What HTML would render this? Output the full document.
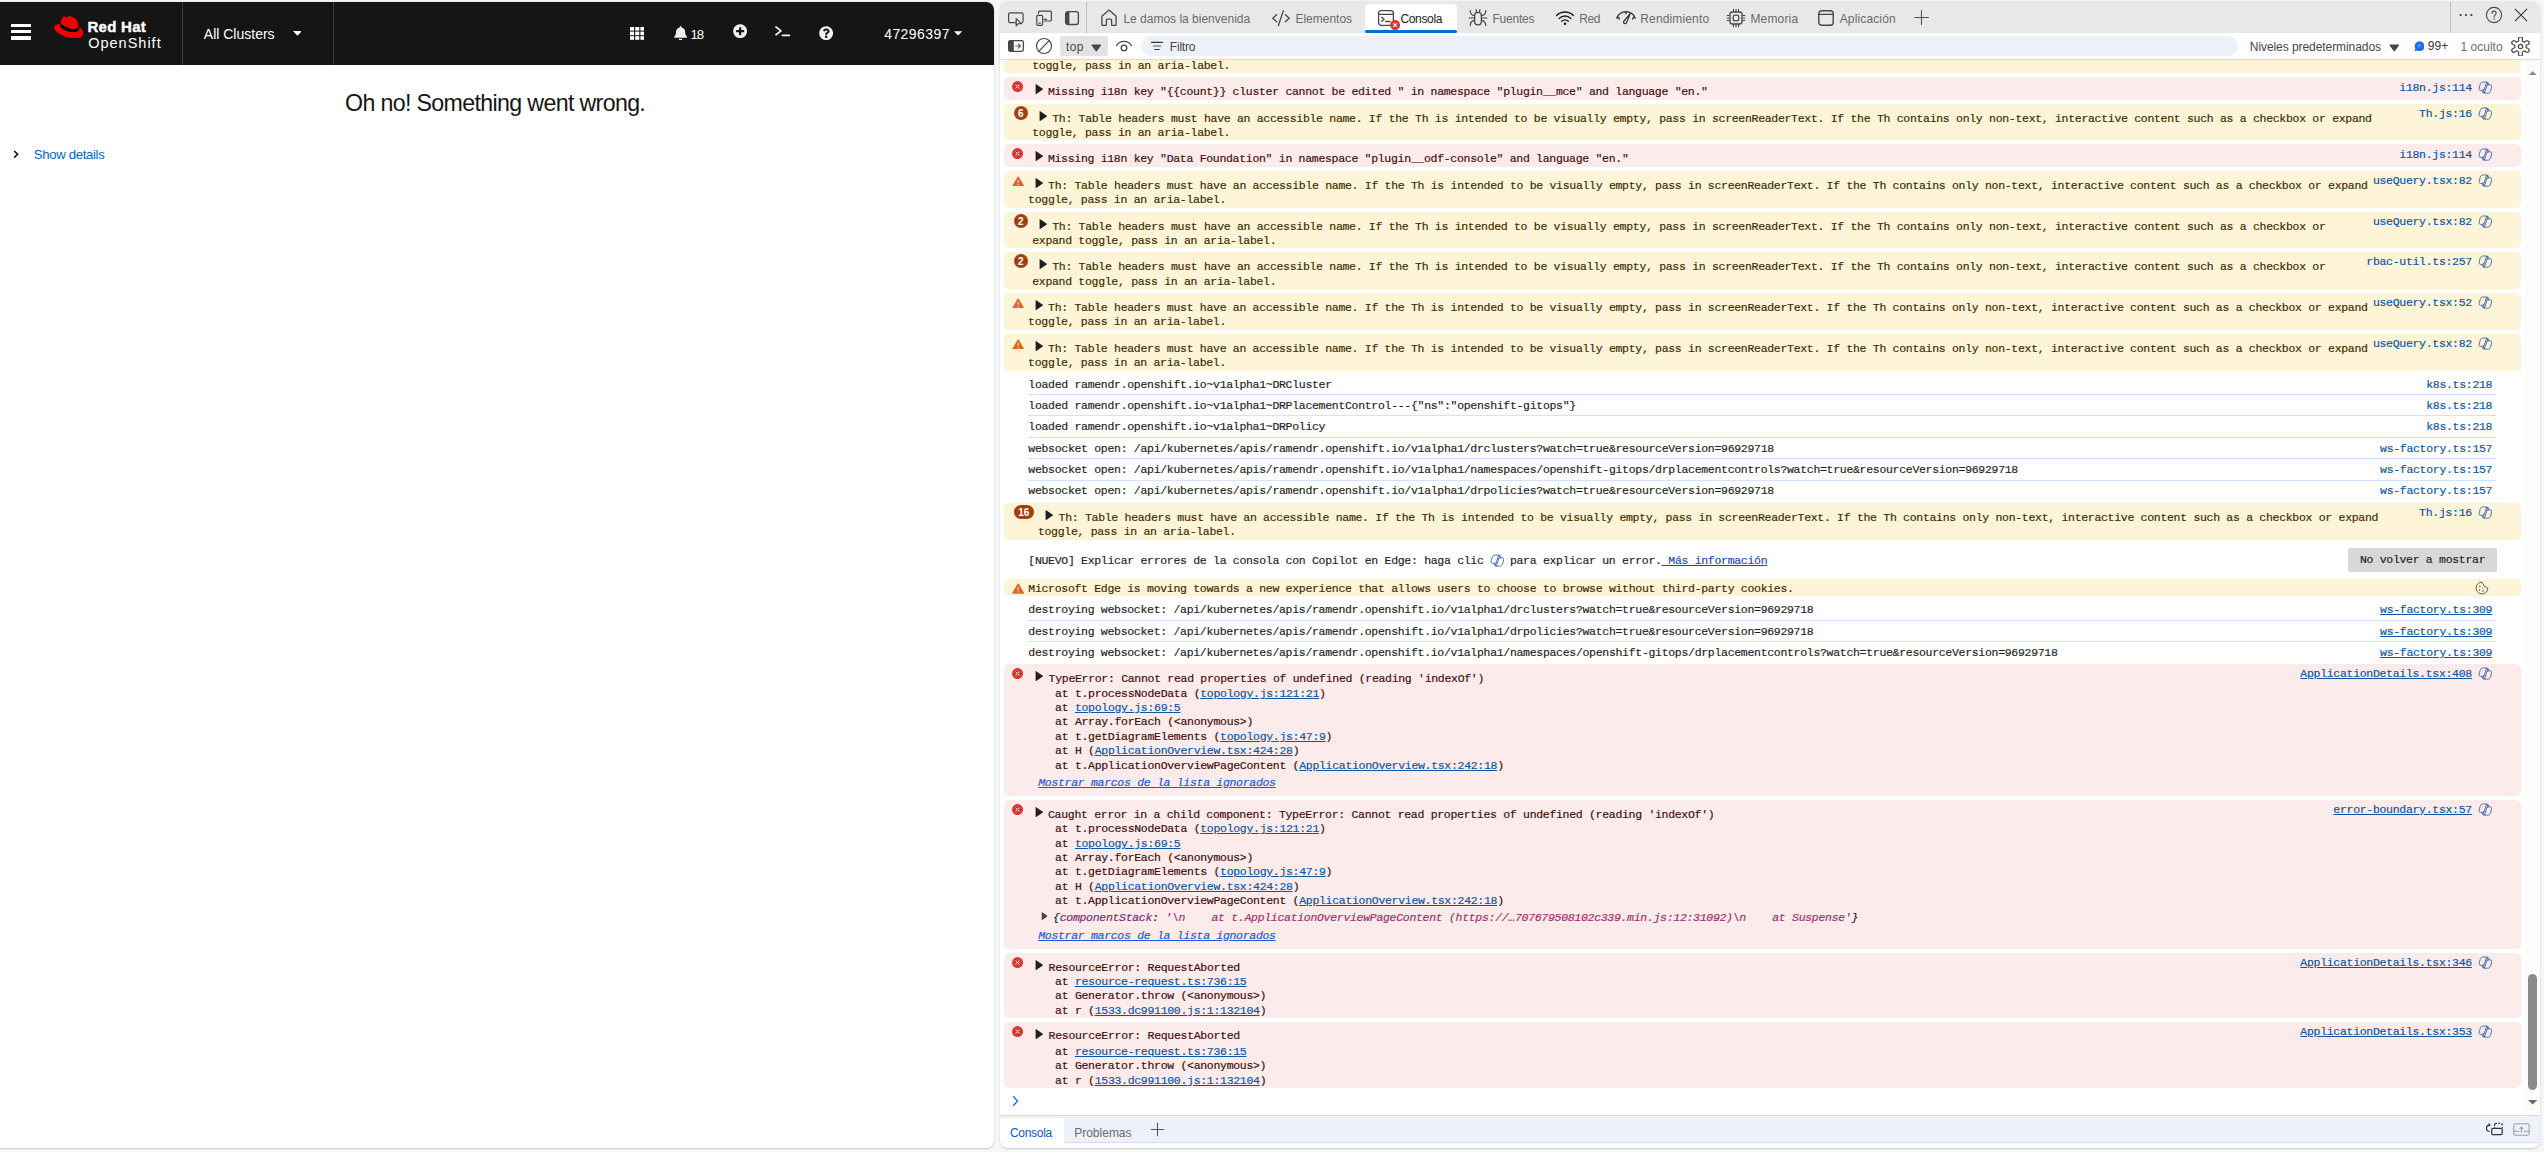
<!DOCTYPE html>
<html lang="es"><head><meta charset="utf-8"><title>OpenShift - DevTools</title>
<style>
html,body{margin:0;padding:0}
body{width:2544px;height:1152px;position:relative;overflow:hidden;background:#f6f6f6;font-family:"Liberation Sans",sans-serif}
.abs,.m,.s,.row,.sep,.ic{position:absolute}
#left{position:absolute;left:0;top:2px;width:994px;height:1146px;background:#fff;border-radius:0 8px 8px 0;overflow:hidden;box-shadow:0 .5px 2px rgba(0,0,0,.18)}
#dt{position:absolute;left:1000px;top:2px;width:1540px;height:1146px;background:#fff;border-radius:8px;overflow:hidden;box-shadow:0 .5px 2px rgba(0,0,0,.18)}
.m{font:11.5px/14px "Liberation Mono",monospace;letter-spacing:-0.3035px;white-space:pre;color:#1f1f1f;-webkit-text-stroke:0.18px currentColor}
.s{font-family:"Liberation Sans",sans-serif;white-space:pre}
.row{left:4px;width:1517px;border-radius:5px}
.err{background:#fcebeb}
.wrn{background:#fef4d7}
.m.e{color:#410e0b}
.m.w{color:#3d2c00}
.m.a{color:#0b57a4}
.m.u, .m u{text-decoration:underline}
.m.i{font-style:italic}
.m u.a{color:#0b57a4}
.sep{height:1px;background:#d3e3fd}
</style></head><body>
<div id="left"><div class="abs" style="left:0px;top:0px;width:994px;height:62.5px;background:#151515"></div><div class="abs" style="left:11.2px;top:21.6px;width:19.4px;height:3.4px;background:#fff;border-radius:.5px"></div><div class="abs" style="left:11.2px;top:27.9px;width:19.4px;height:3.4px;background:#fff;border-radius:.5px"></div><div class="abs" style="left:11.2px;top:34.4px;width:19.4px;height:3.4px;background:#fff;border-radius:.5px"></div><svg class="ic" style="left:53.6px;top:13.6px;" width="29.6" height="22.5" viewBox="0 0 191.35 145"><path fill="#e00" d="M127.47,83.49c12.51,0,30.61-2.58,30.61-17.46a14,14,0,0,0-.31-3.42l-7.45-32.36c-1.72-7.12-3.23-10.35-15.73-16.6C124.89,8.69,103.76.5,97.51.5,91.69.5,90,8,83.06,8c-6.68,0-11.64-5.6-17.89-5.6-6,0-9.91,4.09-12.93,12.5,0,0-8.41,23.72-9.49,27.16A6.43,6.43,0,0,0,42.53,44c0,9.22,36.3,39.45,84.94,39.45M160,72.07c1.73,8.19,1.73,9.05,1.73,10.13,0,14-15.74,21.77-36.43,21.77C78.54,104,37.58,76.6,37.58,58.49a18.45,18.45,0,0,1,1.51-7.33C22.27,52,.5,55,.5,74.22c0,31.48,74.59,70.28,133.65,70.28,45.28,0,56.7-20.48,56.7-36.65,0-12.72-11-27.16-30.83-35.78"/><path fill="#000" d="M160,72.07c1.73,8.19,1.73,9.05,1.73,10.13,0,14-15.74,21.77-36.43,21.77C78.54,104,37.58,76.6,37.58,58.49a18.45,18.45,0,0,1,1.51-7.33l3.66-9.06A6.43,6.43,0,0,0,42.53,44c0,9.22,36.3,39.45,84.94,39.45,12.510,0,30.61-2.58,30.61-17.46a14,14,0,0,0-.31-3.42Z"/></svg><div class="s" style="left:87.4px;top:15.2px;font-size:15px;line-height:20px;color:#fff;font-weight:700;letter-spacing:0.3px;-webkit-text-stroke:.4px #fff;">Red Hat</div><div class="s" style="left:88.2px;top:32.38px;font-size:14.5px;line-height:19px;color:#fff;font-weight:400;letter-spacing:1px;">OpenShift</div><div class="abs" style="left:182px;top:0px;width:1px;height:62.5px;background:#3c3f42"></div><div class="s" style="left:203.8px;top:23.45px;font-size:14px;line-height:18px;color:#fff;font-weight:400;">All Clusters</div><svg class="ic" style="left:292.6px;top:29.4px;" width="8.8" height="4.8" viewBox="0 0 10 5.4"><path fill="#fff" d="M0 0h10L5 5.4z"/></svg><div class="abs" style="left:333px;top:0px;width:1px;height:62.5px;background:#3c3f42"></div><svg class="ic" style="left:629.8px;top:24.8px;" width="14.5" height="12.8" viewBox="0 0 14.5 12.8"><rect x="0.0" y="0.0" width="4.1" height="3.6" fill="#fff"/><rect x="5.2" y="0.0" width="4.1" height="3.6" fill="#fff"/><rect x="10.4" y="0.0" width="4.1" height="3.6" fill="#fff"/><rect x="0.0" y="4.6" width="4.1" height="3.6" fill="#fff"/><rect x="5.2" y="4.6" width="4.1" height="3.6" fill="#fff"/><rect x="10.4" y="4.6" width="4.1" height="3.6" fill="#fff"/><rect x="0.0" y="9.2" width="4.1" height="3.6" fill="#fff"/><rect x="5.2" y="9.2" width="4.1" height="3.6" fill="#fff"/><rect x="10.4" y="9.2" width="4.1" height="3.6" fill="#fff"/></svg><svg class="ic" style="left:673.6px;top:23.6px;" width="13.2" height="14.6" viewBox="0 0 448 512"><path fill="#f0f0f0" d="M224 512c35.32 0 63.97-28.65 63.97-64H160.03c0 35.35 28.65 64 63.97 64zm215.39-149.71c-19.32-20.76-55.47-51.99-55.47-154.29 0-77.7-54.48-139.9-127.94-155.16V32c0-17.67-14.32-32-31.98-32s-31.98 14.33-31.98 32v20.84C118.56 68.1 64.08 130.300 64.08 208c0 102.300-36.15 133.530-55.47 154.290-6 6.450-8.660 14.160-8.610 21.710.110 16.400 12.980 32 32.100 32h383.800c19.120 0 32-15.600 32.100-32 .050-7.550-2.610-15.270-8.610-21.710z"/></svg><div class="s" style="left:690.6px;top:23.83px;font-size:13.2px;line-height:17px;color:#fff;font-weight:400;letter-spacing:-1.2px;">18</div><svg class="ic" style="left:733px;top:22px;" width="14.3" height="14.3" viewBox="0 0 512 512"><path fill="#f0f0f0" d="M256 8C119 8 8 119 8 256s111 248 248 248 248-111 248-248S393 8 256 8zm144 276c0 6.600-5.400 12-12 12h-92v92c0 6.600-5.400 12-12 12h-56c-6.600 0-12-5.400-12-12v-92h-92c-6.600 0-12-5.400-12-12v-56c0-6.600 5.400-12 12-12h92v-92c0-6.600 5.400-12 12-12h56c6.600 0 12 5.400 12 12v92h92c6.600 0 12 5.400 12 12v56z"/></svg><svg class="ic" style="left:775.3px;top:24.3px;" width="15.4" height="10.6" viewBox="0 0 15.4 10.6"><path d="M1 1l5 3.900-5 3.900M7.400 9.400h7" fill="none" stroke="#f0f0f0" stroke-width="1.700" stroke-linecap="round" stroke-linejoin="round"/></svg><svg class="ic" style="left:818.9px;top:24.1px;" width="14.3" height="14.3" viewBox="0 0 512 512"><path fill="#f0f0f0" d="M504 256c0 136.997-111.043 248-248 248S8 392.997 8 256C8 119.083 119.043 8 256 8s248 111.083 248 248zM262.655 90c-54.497 0-89.255 22.957-116.549 63.758-3.536 5.286-2.353 12.415 2.715 16.258l34.699 26.310c5.205 3.947 12.621 3.008 16.665-2.122 17.864-22.658 30.113-35.797 57.303-35.797 20.429 0 45.698 13.148 45.698 32.958 0 14.976-12.363 22.667-32.534 33.976C247.128 238.528 216 254.941 216 296v4c0 6.627 5.373 12 12 12h56c6.627 0 12-5.373 12-12v-1.333c0-28.462 83.186-29.647 83.186-106.667 0-58.002-60.165-102-116.531-102zM256 338c-25.365 0-46 20.635-46 46 0 25.364 20.635 46 46 46s46-20.636 46-46c0-25.365-20.635-46-46-46z"/></svg><div class="s" style="left:884.2px;top:23.05px;font-size:14px;line-height:18px;color:#fff;font-weight:400;letter-spacing:0.42px;">47296397</div><svg class="ic" style="left:954.3px;top:29.4px;" width="8.2" height="4.8" viewBox="0 0 10 5.400"><path fill="#fff" d="M0 0h10L5 5.400z"/></svg><div class="s" style="left:345px;top:85.76px;font-size:23.2px;line-height:30px;color:#151515;font-weight:400;letter-spacing:-0.65px;">Oh no! Something went wrong.</div><svg class="ic" style="left:13px;top:148px;" width="6" height="8.6" viewBox="0 0 6 8.600"><path d="M1.200 1l3.400 3.300-3.400 3.300" fill="none" stroke="#151515" stroke-width="1.600"/></svg><div class="s" style="left:33.8px;top:144.13px;font-size:13.2px;line-height:17px;color:#0066cc;font-weight:400;letter-spacing:-0.35px;">Show details</div></div><div id="dt"><!--ROWS--><div class="abs" style="left:0px;top:0px;width:1540px;height:30.7px;background:#e8e8e8"></div><div class="abs" style="left:0px;top:30.7px;width:1540px;height:26.5px;background:#fff"></div><div class="abs" style="left:0px;top:57.2px;width:1540px;height:1px;background:#cfdcf6"></div><svg class="ic" style="left:7px;top:8px;" width="19" height="18" viewBox="0 0 19 18"><path d="M8.500 12.700H3.200a1.600 1.600 0 0 1-1.600-1.600V4.400a1.600 1.600 0 0 1 1.600-1.600h11.300a1.600 1.600 0 0 1 1.600 1.600v6.700a1.600 1.600 0 0 1-.9 1.400" fill="none" stroke="#474747" stroke-width="1.2" stroke-linecap="round" stroke-linejoin="round" /><path d="M9.200 8.600v7.200l2.100-2.100 3.300-.1z" fill="none" stroke="#474747" stroke-width="1.2" stroke-linecap="round" stroke-linejoin="round" /></svg><svg class="ic" style="left:35px;top:6px;" width="18" height="18" viewBox="0 0 18 18"><path d="M3.500 5.300V4.500a1.300 1.300 0 0 1 1.300-1.300h10.300a1.300 1.300 0 0 1 1.300 1.300v7.200a1.300 1.300 0 0 1-1.300 1.300H9.300M9.300 11.300h2.300" fill="none" stroke="#474747" stroke-width="1.2" stroke-linecap="round" stroke-linejoin="round" /><path d="M2.800 7.300h3.800a1 1 0 0 1 1 1v8a1 1 0 0 1-1 1H2.800a1 1 0 0 1-1-1v-8a1 1 0 0 1 1-1zM4 15.200h1.400" fill="none" stroke="#474747" stroke-width="1.2" stroke-linecap="round" stroke-linejoin="round" /></svg><svg class="ic" style="left:64px;top:6px;" width="16" height="18" viewBox="0 0 16 18"><rect x="1.600" y="3.700" width="12.800" height="12.800" rx="2.200" fill="none" stroke="#474747" stroke-width="1.300"/><path d="M3.800 3.700h1.600v12.800H3.800a2.200 2.200 0 0 1-2.200-2.200V5.900a2.200 2.200 0 0 1 2.200-2.200z" fill="#474747"/></svg><div class="abs" style="left:86px;top:0px;width:1px;height:30.7px;background:#b9bfd0"></div><svg class="ic" style="left:100px;top:6px;" width="18" height="18" viewBox="0 0 18 18"><path d="M9 2.100l7.100 6.100v8.200a1.100 1.100 0 0 1-1.100 1.100h-2.300a1.100 1.100 0 0 1-1.100-1.100v-4.200a1.100 1.100 0 0 0-1.100-1.100h-3a1.100 1.100 0 0 0-1.100 1.100v4.200a1.100 1.100 0 0 1-1.100 1.100H3a1.100 1.100 0 0 1-1.100-1.100V8.200z" fill="none" stroke="#474747" stroke-width="1.3" stroke-linecap="round" stroke-linejoin="round" /></svg><div class="s" style="left:123.4px;top:8.64px;font-size:12px;line-height:16px;color:#6b6b6b;font-weight:400;">Le damos la bienvenida</div><svg class="ic" style="left:271px;top:7px;" width="20" height="18" viewBox="0 0 20 18"><path d="M5.700 5.600L1.800 9.200l3.900 3.600M14.300 5.600l3.900 3.600-3.900 3.600M12.400 1.600L7.400 16.500" fill="none" stroke="#474747" stroke-width="1.3" stroke-linecap="round" stroke-linejoin="round" /></svg><div class="s" style="left:295.4px;top:8.64px;font-size:12px;line-height:16px;color:#6b6b6b;font-weight:400;">Elementos</div><div class="abs" style="left:365px;top:2.1px;width:92px;height:28.6px;background:#fff;border-radius:4px 4px 0 0"></div><div class="abs" style="left:365px;top:28.1px;width:92px;height:2.9px;background:#0070d2;border-radius:1.500px"></div><svg class="ic" style="left:377px;top:7px;" width="18" height="18" viewBox="0 0 18 18"><rect x="1.600" y="1.700" width="14.800" height="14.600" rx="2.600" fill="none" stroke="#474747" stroke-width="1.300"/><path d="M1.600 5.300h14.800M4.800 8.300l2.300 2-2.300 2M8.700 12.500h4.200" fill="none" stroke="#474747" stroke-width="1.3" stroke-linecap="round" stroke-linejoin="round" /></svg><svg class="ic" style="left:390px;top:17.8px;" width="10.2" height="10.2" viewBox="0 0 10 10"><circle cx="5" cy="5" r="4.900" fill="#dc362e"/><path d="M3.300 3.300l3.400 3.400M6.700 3.300L3.300 6.700" stroke="#fff" stroke-width="1.100"/></svg><div class="s" style="left:400.4px;top:8.64px;font-size:12px;line-height:16px;color:#1b1b1b;font-weight:400;letter-spacing:-0.33px;">Consola</div><svg class="ic" style="left:468px;top:6px;" width="20" height="19" viewBox="0 0 20 19"><rect x="6.600" y="4.300" width="6.800" height="12.600" rx="3.400" fill="none" stroke="#474747" stroke-width="1.300"/><path d="M8.500 4.100L8.100 1.600M11.500 4.100l.400-2.500M6.600 7.700c-2.600-.300-4.200-2-4.400-5M13.400 7.700c2.600-.300 4.200-2 4.400-5M6.600 10H1.200M13.400 10h5.400M6.600 12.400c-2.600.300-4.200 2-4.400 5M13.400 12.400c2.600.300 4.200 2 4.400 5" fill="none" stroke="#474747" stroke-width="1.2" stroke-linecap="round" stroke-linejoin="round" /></svg><div class="s" style="left:492.4px;top:8.64px;font-size:12px;line-height:16px;color:#6b6b6b;font-weight:400;letter-spacing:-0.2px;">Fuentes</div><svg class="ic" style="left:555px;top:8px;" width="20" height="17" viewBox="0 0 20 17"><path d="M1.600 5.400c4.900-4.600 11.900-4.600 16.800 0M4.100 8.400c3.500-3.200 8.300-3.200 11.800 0M6.700 11.300c2-1.700 4.600-1.700 6.600 0" fill="none" stroke="#1b1b1b" stroke-width="1.4" stroke-linecap="round" stroke-linejoin="round" /><circle cx="10" cy="13.800" r="1.300" fill="#1b1b1b"/></svg><div class="s" style="left:579.2px;top:8.64px;font-size:12px;line-height:16px;color:#6b6b6b;font-weight:400;letter-spacing:-0.4px;">Red</div><svg class="ic" style="left:615px;top:8px;" width="22" height="16" viewBox="0 0 22 16"><path d="M1.700 8.100C3.600 3.700 7 1.700 11 1.700c4 0 7.300 2 9.300 6.400M11 1.700v2.200M1.700 8.100l2-.800.700 1.900M20.300 8.100l-2-.800-.700 1.900" fill="none" stroke="#333" stroke-width="1.2" stroke-linecap="round" stroke-linejoin="round" /><path d="M15.400 3.300l-3.900 9.400a1.500 1.500 0 0 1-2.800-1.200z" fill="none" stroke="#333" stroke-width="1.2" stroke-linecap="round" stroke-linejoin="round" /></svg><div class="s" style="left:640.3px;top:8.64px;font-size:12px;line-height:16px;color:#6b6b6b;font-weight:400;letter-spacing:0.14px;">Rendimiento</div><svg class="ic" style="left:726px;top:6px;" width="20" height="20" viewBox="0 0 20 20"><rect x="4" y="4" width="12" height="12" rx="2.300" fill="none" stroke="#474747" stroke-width="1.300"/><rect x="7.200" y="7.200" width="5.600" height="5.600" rx="1.800" fill="none" stroke="#474747" stroke-width="1.300"/><path d="M7.500 1.200v2.400M10 1.200v2.400M12.500 1.200v2.400M7.500 16.400v2.400M10 16.400v2.400M12.500 16.400v2.400M1.200 7.500h2.400M1.200 10h2.400M1.200 12.500h2.400M16.400 7.500h2.400M16.400 10h2.400M16.400 12.500h2.400" fill="none" stroke="#474747" stroke-width="1.1" stroke-linecap="round" stroke-linejoin="round" /></svg><div class="s" style="left:750.4px;top:8.64px;font-size:12px;line-height:16px;color:#6b6b6b;font-weight:400;letter-spacing:0.17px;">Memoria</div><svg class="ic" style="left:817px;top:7px;" width="18" height="18" viewBox="0 0 18 18"><rect x="1.800" y="1.700" width="14.400" height="14.600" rx="2.800" fill="none" stroke="#474747" stroke-width="1.400"/><path d="M1.800 5.400h14.400" fill="none" stroke="#474747" stroke-width="1.4" stroke-linecap="round" stroke-linejoin="round" /></svg><div class="s" style="left:839.7px;top:8.64px;font-size:12px;line-height:16px;color:#6b6b6b;font-weight:400;letter-spacing:0.14px;">Aplicación</div><svg class="ic" style="left:913px;top:7px;" width="17" height="17" viewBox="0 0 17 17"><path d="M8.500 1.600v13.800M1.600 8.500h13.800" fill="none" stroke="#555" stroke-width="1.1" stroke-linecap="round" stroke-linejoin="round" /></svg><div class="abs" style="left:1450px;top:0px;width:1px;height:30.7px;background:#b9bfd0"></div><svg class="ic" style="left:1458px;top:10px;" width="16" height="6" viewBox="0 0 16 6"><circle cx="2.600" cy="3" r="1.100" fill="#333"/><circle cx="8" cy="3" r="1.100" fill="#333"/><circle cx="13.400" cy="3" r="1.100" fill="#333"/></svg><svg class="ic" style="left:1485px;top:4px;" width="18" height="18" viewBox="0 0 18 18"><circle cx="9" cy="9" r="7.600" fill="none" stroke="#474747" stroke-width="1.100"/><path d="M6.900 7.200c0-1.300 1-2.100 2.200-2.100s2.100.800 2.100 2c0 1.700-2.100 1.800-2.100 3.800" fill="none" stroke="#474747" stroke-width="1.1" stroke-linecap="round" stroke-linejoin="round" /><circle cx="9.100" cy="12.900" r=".75" fill="#474747"/></svg><svg class="ic" style="left:1514px;top:6px;" width="14" height="14" viewBox="0 0 14 14"><path d="M1.200 1.200l11.600 11.600M12.800 1.200L1.200 12.800" fill="none" stroke="#333" stroke-width="1.1" stroke-linecap="round" stroke-linejoin="round" /></svg><svg class="ic" style="left:7px;top:36px;" width="18" height="16" viewBox="0 0 18 16"><rect x="1.600" y="2.600" width="14.800" height="10.800" rx="1.800" fill="none" stroke="#474747" stroke-width="1.300"/><path d="M3.400 2.600h3.400v10.800H3.400a1.800 1.800 0 0 1-1.800-1.800V4.400a1.800 1.800 0 0 1 1.800-1.800z" fill="#474747"/><path d="M8.700 8h4.700M11.400 6l2 2-2 2" fill="none" stroke="#666" stroke-width="1.2" stroke-linecap="round" stroke-linejoin="round" /></svg><svg class="ic" style="left:35px;top:35px;" width="18" height="18" viewBox="0 0 18 18"><circle cx="9" cy="9" r="7.500" fill="none" stroke="#474747" stroke-width="1.200"/><path d="M3.800 14.400L14.200 3.600" fill="none" stroke="#474747" stroke-width="1.2" stroke-linecap="round" stroke-linejoin="round" /></svg><div class="abs" style="left:60.2px;top:34.1px;width:47.6px;height:19.8px;background:#e3e3e3;border-radius:3px"></div><div class="s" style="left:66px;top:36.74px;font-size:12px;line-height:16px;color:#474747;font-weight:400;letter-spacing:0.4px;">top</div><svg class="ic" style="left:90.5px;top:42.2px;" width="10.6" height="8" viewBox="0 0 10.600 8"><path d="M1 .6h8.600a.500.500 0 0 1 .400.800L5.700 7.300a.500.500 0 0 1-.800 0L.6 1.400A.500.500 0 0 1 1 .6z" fill="#474747"/></svg><svg class="ic" style="left:115px;top:37px;" width="18" height="14" viewBox="0 0 18 14"><path d="M1.500 6.700C3 3.700 5.700 2.300 9 2.300s6 1.400 7.500 4.400" fill="none" stroke="#474747" stroke-width="1.2" stroke-linecap="round" stroke-linejoin="round" /><circle cx="9" cy="8.900" r="2.800" fill="none" stroke="#474747" stroke-width="1.300"/></svg><div class="abs" style="left:141.2px;top:34.1px;width:1097.3px;height:19.8px;background:#edf2fa;border-radius:10px"></div><svg class="ic" style="left:150px;top:38px;" width="14" height="12" viewBox="0 0 14 12"><path d="M1.600 2.400h10.800" fill="none" stroke="#333" stroke-width="1.2" stroke-linecap="round" stroke-linejoin="round" /><path d="M3.400 6h7.200" fill="none" stroke="#888" stroke-width="1.5" stroke-linecap="round" stroke-linejoin="round" /><path d="M4.900 9.500h4.200" fill="none" stroke="#333" stroke-width="1.2" stroke-linecap="round" stroke-linejoin="round" /></svg><div class="s" style="left:169.8px;top:36.54px;font-size:12px;line-height:16px;color:#474747;font-weight:400;letter-spacing:-0.2px;">Filtro</div><div class="s" style="left:1249.8px;top:36.54px;font-size:12px;line-height:16px;color:#474747;font-weight:400;letter-spacing:-0.07px;">Niveles predeterminados</div><svg class="ic" style="left:1388.5px;top:42.2px;" width="10.6" height="8" viewBox="0 0 10.600 8"><path d="M1 .6h8.600a.500.500 0 0 1 .400.800L5.700 7.300a.500.500 0 0 1-.800 0L.6 1.400A.500.500 0 0 1 1 .6z" fill="#474747"/></svg><svg class="ic" style="left:1413.6px;top:38.7px;" width="10.8" height="10.4" viewBox="0 0 10.800 10.400"><path d="M5.600.3a4.900 4.900 0 1 1-2.500 9.100L.4 10.100l.9-2.500A4.900 4.900 0 0 1 5.600.3z" fill="#1b6ef3"/><path d="M4 4.100h3M4 5.700h1.500" stroke="#9cc0fb" stroke-width=".8"/></svg><div class="s" style="left:1427.8px;top:35.64px;font-size:12px;line-height:16px;color:#3a3a3a;font-weight:400;">99+</div><div class="s" style="left:1460.6px;top:36.54px;font-size:12px;line-height:16px;color:#6e6e6e;font-weight:400;">1 oculto</div><svg class="ic" style="left:1511.4px;top:34.5px;" width="19" height="19" viewBox="0 0 19 19"><path d="M7.82 4.05L7.47 1.87A1.6 1.6 0 0 1 11.53 1.87L11.18 4.05A5.7 5.7 0 0 1 13.37 5.32L13.37 5.32L15.10 3.92A1.6 1.6 0 0 1 17.13 7.44L15.06 8.24A5.7 5.7 0 0 1 15.06 10.76L15.06 10.76L17.13 11.56A1.6 1.6 0 0 1 15.10 15.08L13.37 13.68A5.7 5.7 0 0 1 11.18 14.95L11.18 14.95L11.53 17.13A1.6 1.6 0 0 1 7.47 17.13L7.82 14.95A5.7 5.7 0 0 1 5.63 13.68L5.63 13.68L3.90 15.08A1.6 1.6 0 0 1 1.87 11.56L3.94 10.76A5.7 5.7 0 0 1 3.94 8.24L3.94 8.24L1.87 7.44A1.6 1.6 0 0 1 3.90 3.92L5.63 5.32A5.7 5.7 0 0 1 7.82 4.05Z" fill="none" stroke="#474747" stroke-width="1.2" stroke-linecap="round" stroke-linejoin="round" /><circle cx="9.500" cy="9.500" r="2.200" fill="none" stroke="#474747" stroke-width="1.200"/></svg><div class="row wrn" style="top:58.2px;height:12.6px;border-radius:0 0 5px 5px;"></div><div class="m w" style="left:32.2px;top:56.93px;">toggle, pass in an aria-label.</div><div class="row err" style="top:74.9px;height:22.9px;"></div><svg class="ic" style="left:12.4px;top:79.15px;" width="11.1" height="11.1" viewBox="0 0 11.6 11.6"><circle cx="5.800" cy="5.800" r="5.750" fill="#dc362e"/><path d="M3.800 3.800l4 4M7.800 3.800l-4 4" stroke="#fff" stroke-width="1"/></svg><svg class="ic" style="left:35px;top:81.8px;" width="8.1" height="10.2" viewBox="0 0 8.100 10.200"><path d="M.600 .500a.400.400 0 0 1 .600-.300l6.600 4.500a.400.400 0 0 1 0 .700L1.200 9.900a.400.400 0 0 1-.600-.300z" fill="#1f1f1f"/></svg><div class="m e" style="left:47.9px;top:82.93px;">Missing i18n key "{{count}} cluster cannot be edited " in namespace "plugin__mce" and language "en."</div><div class="m a" style="left:1399.33px;top:78.93px;">i18n.js:114</div><svg class="ic" style="left:1477.6px;top:79.3px;" width="14.4" height="13.2" viewBox="0 0 14.4 13.200"><g fill="none" stroke="#2456a8" stroke-width=".800" stroke-linejoin="round"><path d="M5.300 1h3.300c.900 0 1.500.500 1.800 1.300l.500 1.500h1.300c1.100 0 1.800 1 1.500 2.100l-1.100 4c-.400 1.400-1.400 2.300-2.900 2.300H6.400c-.900 0-1.500-.500-1.800-1.300l-.500-1.500H2.600C1.500 9.400.800 8.400 1.100 7.300l1.100-4C2.600 1.900 3.800 1 5.300 1z"/><path d="M8.600 1L5.100 12.100M9.900 1.300L6.400 12.200M4.100 9.400c.800 0 1.300-.400 1.500-1.200M10.900 3.800c-.800 0-1.300.400-1.500 1.200"/></g></svg><div class="row wrn" style="top:101.9px;height:35.9px;"></div><div class="abs" style="left:14px;top:103.9px;width:13.9px;height:13.900px;border-radius:7px;background:#a2400f;color:#fff;font:700 10px/15.800px 'Liberation Sans',sans-serif;text-align:center;letter-spacing:0.100px">6</div><svg class="ic" style="left:39.1px;top:108.8px;" width="8.1" height="10.2" viewBox="0 0 8.100 10.200"><path d="M.600 .500a.400.400 0 0 1 .600-.300l6.600 4.500a.400.400 0 0 1 0 .700L1.200 9.900a.400.400 0 0 1-.600-.300z" fill="#1f1f1f"/></svg><div class="m w" style="left:52.2px;top:109.93px;">Th: Table headers must have an accessible name. If the Th is intended to be visually empty, pass in screenReaderText. If the Th contains only non-text, interactive content such as a checkbox or expand</div><div class="m w" style="left:32.2px;top:123.93px;">toggle, pass in an aria-label.</div><div class="m a" style="left:1419.12px;top:104.93px;">Th.js:16</div><svg class="ic" style="left:1477.6px;top:105.3px;" width="14.4" height="13.2" viewBox="0 0 14.4 13.200"><g fill="none" stroke="#2456a8" stroke-width=".800" stroke-linejoin="round"><path d="M5.300 1h3.300c.900 0 1.500.500 1.800 1.300l.500 1.500h1.300c1.100 0 1.800 1 1.500 2.100l-1.100 4c-.400 1.400-1.400 2.300-2.900 2.300H6.400c-.900 0-1.500-.500-1.800-1.300l-.500-1.500H2.600C1.500 9.400.800 8.400 1.100 7.300l1.100-4C2.600 1.900 3.800 1 5.300 1z"/><path d="M8.600 1L5.100 12.100M9.900 1.300L6.400 12.200M4.100 9.400c.800 0 1.300-.400 1.500-1.200M10.900 3.800c-.800 0-1.300.400-1.500 1.200"/></g></svg><div class="row err" style="top:141.9px;height:22.9px;"></div><svg class="ic" style="left:12.4px;top:146.15px;" width="11.1" height="11.1" viewBox="0 0 11.6 11.6"><circle cx="5.800" cy="5.800" r="5.750" fill="#dc362e"/><path d="M3.800 3.800l4 4M7.800 3.800l-4 4" stroke="#fff" stroke-width="1"/></svg><svg class="ic" style="left:35px;top:148.8px;" width="8.1" height="10.2" viewBox="0 0 8.100 10.200"><path d="M.600 .500a.400.400 0 0 1 .600-.300l6.600 4.500a.400.400 0 0 1 0 .700L1.200 9.900a.400.400 0 0 1-.600-.300z" fill="#1f1f1f"/></svg><div class="m e" style="left:47.9px;top:149.93px;">Missing i18n key "Data Foundation" in namespace "plugin__odf-console" and language "en."</div><div class="m a" style="left:1399.33px;top:145.93px;">i18n.js:114</div><svg class="ic" style="left:1477.6px;top:146.3px;" width="14.4" height="13.2" viewBox="0 0 14.4 13.200"><g fill="none" stroke="#2456a8" stroke-width=".800" stroke-linejoin="round"><path d="M5.300 1h3.300c.900 0 1.500.500 1.800 1.300l.500 1.500h1.300c1.100 0 1.800 1 1.500 2.100l-1.100 4c-.400 1.400-1.400 2.300-2.900 2.300H6.400c-.900 0-1.500-.500-1.800-1.300l-.500-1.500H2.600C1.500 9.400.800 8.400 1.100 7.300l1.100-4C2.600 1.900 3.800 1 5.300 1z"/><path d="M8.600 1L5.100 12.100M9.900 1.300L6.400 12.200M4.100 9.400c.800 0 1.300-.400 1.500-1.200M10.900 3.800c-.800 0-1.300.400-1.500 1.200"/></g></svg><div class="row wrn" style="top:169.1px;height:36.9px;"></div><svg class="ic" style="left:11.8px;top:173.6px;" width="12.4" height="10.8" viewBox="0 0 12.4 10.800"><path d="M6.200 .500a.700.700 0 0 1 .600.350l5.200 8.900a.700.700 0 0 1-.600 1.050H1a.700.700 0 0 1-.600-1.050L5.600.850A.700.700 0 0 1 6.200.500z" fill="#e8632a"/><path d="M6.200 3.700v3.400" stroke="#fbd0b8" stroke-width="1.200"/><circle cx="6.200" cy="8.700" r=".70" fill="#fbd0b8"/></svg><svg class="ic" style="left:35px;top:176px;" width="8.1" height="10.2" viewBox="0 0 8.100 10.200"><path d="M.600 .500a.400.400 0 0 1 .600-.300l6.600 4.500a.400.400 0 0 1 0 .700L1.200 9.900a.400.400 0 0 1-.600-.300z" fill="#1f1f1f"/></svg><div class="m w" style="left:48.1px;top:176.93px;">Th: Table headers must have an accessible name. If the Th is intended to be visually empty, pass in screenReaderText. If the Th contains only non-text, interactive content such as a checkbox or expand</div><div class="m w" style="left:28.1px;top:190.93px;">toggle, pass in an aria-label.</div><div class="m a" style="left:1372.93px;top:171.93px;">useQuery.tsx:82</div><svg class="ic" style="left:1477.6px;top:172.3px;" width="14.4" height="13.2" viewBox="0 0 14.4 13.200"><g fill="none" stroke="#2456a8" stroke-width=".800" stroke-linejoin="round"><path d="M5.300 1h3.300c.900 0 1.500.500 1.800 1.300l.500 1.500h1.300c1.100 0 1.800 1 1.500 2.100l-1.100 4c-.400 1.400-1.400 2.300-2.900 2.300H6.400c-.900 0-1.500-.500-1.800-1.300l-.500-1.500H2.600C1.500 9.400.800 8.400 1.100 7.300l1.100-4C2.600 1.900 3.800 1 5.300 1z"/><path d="M8.600 1L5.100 12.100M9.900 1.300L6.400 12.200M4.100 9.400c.800 0 1.300-.400 1.500-1.200M10.900 3.800c-.800 0-1.300.400-1.500 1.200"/></g></svg><div class="row wrn" style="top:209.9px;height:35.7px;"></div><div class="abs" style="left:14px;top:211.9px;width:13.9px;height:13.900px;border-radius:7px;background:#a2400f;color:#fff;font:700 10px/15.800px 'Liberation Sans',sans-serif;text-align:center;letter-spacing:0.100px">2</div><svg class="ic" style="left:39.1px;top:216.8px;" width="8.1" height="10.2" viewBox="0 0 8.100 10.200"><path d="M.600 .500a.400.400 0 0 1 .600-.300l6.600 4.500a.400.400 0 0 1 0 .700L1.200 9.900a.400.400 0 0 1-.600-.300z" fill="#1f1f1f"/></svg><div class="m w" style="left:52.2px;top:217.93px;">Th: Table headers must have an accessible name. If the Th is intended to be visually empty, pass in screenReaderText. If the Th contains only non-text, interactive content such as a checkbox or</div><div class="m w" style="left:32.2px;top:231.93px;">expand toggle, pass in an aria-label.</div><div class="m a" style="left:1372.93px;top:212.93px;">useQuery.tsx:82</div><svg class="ic" style="left:1477.6px;top:213.3px;" width="14.4" height="13.2" viewBox="0 0 14.4 13.200"><g fill="none" stroke="#2456a8" stroke-width=".800" stroke-linejoin="round"><path d="M5.300 1h3.300c.900 0 1.500.500 1.800 1.300l.500 1.500h1.300c1.100 0 1.800 1 1.500 2.100l-1.100 4c-.400 1.400-1.400 2.300-2.900 2.300H6.400c-.900 0-1.500-.500-1.800-1.300l-.500-1.500H2.600C1.500 9.400.800 8.400 1.100 7.300l1.100-4C2.600 1.900 3.800 1 5.300 1z"/><path d="M8.600 1L5.100 12.100M9.900 1.300L6.400 12.200M4.100 9.400c.800 0 1.300-.400 1.500-1.200M10.900 3.800c-.800 0-1.300.400-1.500 1.200"/></g></svg><div class="row wrn" style="top:250.2px;height:36.4px;"></div><div class="abs" style="left:14px;top:252.2px;width:13.9px;height:13.900px;border-radius:7px;background:#a2400f;color:#fff;font:700 10px/15.800px 'Liberation Sans',sans-serif;text-align:center;letter-spacing:0.100px">2</div><svg class="ic" style="left:39.1px;top:257.1px;" width="8.1" height="10.2" viewBox="0 0 8.100 10.200"><path d="M.600 .500a.400.400 0 0 1 .600-.300l6.600 4.500a.400.400 0 0 1 0 .700L1.200 9.900a.400.400 0 0 1-.600-.300z" fill="#1f1f1f"/></svg><div class="m w" style="left:52.2px;top:257.93px;">Th: Table headers must have an accessible name. If the Th is intended to be visually empty, pass in screenReaderText. If the Th contains only non-text, interactive content such as a checkbox or</div><div class="m w" style="left:32.2px;top:272.93px;">expand toggle, pass in an aria-label.</div><div class="m a" style="left:1366.34px;top:252.93px;">rbac-util.ts:257</div><svg class="ic" style="left:1477.6px;top:253.3px;" width="14.4" height="13.2" viewBox="0 0 14.4 13.200"><g fill="none" stroke="#2456a8" stroke-width=".800" stroke-linejoin="round"><path d="M5.300 1h3.300c.900 0 1.500.500 1.800 1.300l.500 1.500h1.300c1.100 0 1.800 1 1.500 2.100l-1.100 4c-.400 1.400-1.400 2.300-2.900 2.300H6.400c-.900 0-1.500-.500-1.800-1.300l-.500-1.500H2.600C1.500 9.400.800 8.400 1.100 7.300l1.100-4C2.600 1.900 3.800 1 5.300 1z"/><path d="M8.600 1L5.100 12.100M9.900 1.300L6.400 12.200M4.100 9.400c.800 0 1.300-.400 1.500-1.200M10.900 3.800c-.800 0-1.300.400-1.500 1.200"/></g></svg><div class="row wrn" style="top:291.1px;height:36.5px;"></div><svg class="ic" style="left:11.8px;top:295.6px;" width="12.4" height="10.8" viewBox="0 0 12.4 10.800"><path d="M6.200 .500a.700.700 0 0 1 .600.350l5.200 8.900a.700.700 0 0 1-.600 1.050H1a.700.700 0 0 1-.600-1.050L5.600.850A.700.700 0 0 1 6.200.500z" fill="#e8632a"/><path d="M6.200 3.700v3.400" stroke="#fbd0b8" stroke-width="1.200"/><circle cx="6.200" cy="8.700" r=".70" fill="#fbd0b8"/></svg><svg class="ic" style="left:35px;top:298px;" width="8.1" height="10.2" viewBox="0 0 8.100 10.200"><path d="M.600 .500a.400.400 0 0 1 .600-.300l6.600 4.500a.400.400 0 0 1 0 .700L1.200 9.900a.400.400 0 0 1-.600-.300z" fill="#1f1f1f"/></svg><div class="m w" style="left:48.1px;top:298.93px;">Th: Table headers must have an accessible name. If the Th is intended to be visually empty, pass in screenReaderText. If the Th contains only non-text, interactive content such as a checkbox or expand</div><div class="m w" style="left:28.1px;top:312.93px;">toggle, pass in an aria-label.</div><div class="m a" style="left:1372.93px;top:293.93px;">useQuery.tsx:52</div><svg class="ic" style="left:1477.6px;top:294.3px;" width="14.4" height="13.2" viewBox="0 0 14.4 13.200"><g fill="none" stroke="#2456a8" stroke-width=".800" stroke-linejoin="round"><path d="M5.300 1h3.300c.900 0 1.500.500 1.800 1.300l.500 1.500h1.300c1.100 0 1.800 1 1.500 2.100l-1.100 4c-.400 1.400-1.400 2.300-2.900 2.300H6.400c-.900 0-1.500-.500-1.800-1.300l-.500-1.500H2.600C1.500 9.400.800 8.400 1.100 7.300l1.100-4C2.600 1.900 3.800 1 5.300 1z"/><path d="M8.600 1L5.100 12.100M9.900 1.300L6.400 12.200M4.100 9.400c.800 0 1.300-.400 1.500-1.200M10.900 3.800c-.800 0-1.300.400-1.500 1.200"/></g></svg><div class="row wrn" style="top:332px;height:36.6px;"></div><svg class="ic" style="left:11.8px;top:336.5px;" width="12.4" height="10.8" viewBox="0 0 12.4 10.800"><path d="M6.200 .500a.700.700 0 0 1 .600.350l5.200 8.900a.700.700 0 0 1-.600 1.050H1a.700.700 0 0 1-.600-1.050L5.600.850A.700.700 0 0 1 6.200.500z" fill="#e8632a"/><path d="M6.200 3.700v3.400" stroke="#fbd0b8" stroke-width="1.200"/><circle cx="6.200" cy="8.700" r=".70" fill="#fbd0b8"/></svg><svg class="ic" style="left:35px;top:338.9px;" width="8.1" height="10.2" viewBox="0 0 8.100 10.200"><path d="M.600 .500a.400.400 0 0 1 .600-.300l6.600 4.500a.400.400 0 0 1 0 .700L1.200 9.900a.400.400 0 0 1-.600-.300z" fill="#1f1f1f"/></svg><div class="m w" style="left:48.1px;top:339.93px;">Th: Table headers must have an accessible name. If the Th is intended to be visually empty, pass in screenReaderText. If the Th contains only non-text, interactive content such as a checkbox or expand</div><div class="m w" style="left:28.1px;top:353.93px;">toggle, pass in an aria-label.</div><div class="m a" style="left:1372.93px;top:334.93px;">useQuery.tsx:82</div><svg class="ic" style="left:1477.6px;top:335.3px;" width="14.4" height="13.2" viewBox="0 0 14.4 13.200"><g fill="none" stroke="#2456a8" stroke-width=".800" stroke-linejoin="round"><path d="M5.300 1h3.300c.900 0 1.500.500 1.800 1.300l.500 1.500h1.300c1.100 0 1.800 1 1.500 2.100l-1.100 4c-.400 1.400-1.400 2.300-2.900 2.300H6.400c-.900 0-1.500-.500-1.800-1.300l-.500-1.500H2.600C1.500 9.400.800 8.400 1.100 7.300l1.100-4C2.600 1.900 3.800 1 5.300 1z"/><path d="M8.600 1L5.100 12.100M9.900 1.300L6.400 12.200M4.100 9.400c.800 0 1.300-.400 1.500-1.200M10.900 3.800c-.800 0-1.300.400-1.500 1.200"/></g></svg><div class="m " style="left:28.3px;top:375.93px;">loaded ramendr.openshift.io~v1alpha1~DRCluster</div><div class="m a" style="left:1426.22px;top:375.93px;">k8s.ts:218</div><div class="m " style="left:28.3px;top:396.93px;">loaded ramendr.openshift.io~v1alpha1~DRPlacementControl---{"ns":"openshift-gitops"}</div><div class="m a" style="left:1426.22px;top:396.93px;">k8s.ts:218</div><div class="m " style="left:28.3px;top:417.93px;">loaded ramendr.openshift.io~v1alpha1~DRPolicy</div><div class="m a" style="left:1426.22px;top:417.93px;">k8s.ts:218</div><div class="m " style="left:28.3px;top:439.93px;">websocket open: /api/kubernetes/apis/ramendr.openshift.io/v1alpha1/drclusters?watch=true&amp;resourceVersion=96929718</div><div class="m a" style="left:1380.04px;top:439.93px;">ws-factory.ts:157</div><div class="m " style="left:28.3px;top:460.93px;">websocket open: /api/kubernetes/apis/ramendr.openshift.io/v1alpha1/namespaces/openshift-gitops/drplacementcontrols?watch=true&amp;resourceVersion=96929718</div><div class="m a" style="left:1380.04px;top:460.93px;">ws-factory.ts:157</div><div class="m " style="left:28.3px;top:481.93px;">websocket open: /api/kubernetes/apis/ramendr.openshift.io/v1alpha1/drpolicies?watch=true&amp;resourceVersion=96929718</div><div class="m a" style="left:1380.04px;top:481.93px;">ws-factory.ts:157</div><div class="abs" style="left:28px;top:391.9px;width:1467.8px;height:1px;background:#d3e3fd"></div><div class="abs" style="left:28px;top:412.9px;width:1467.8px;height:1px;background:#d3e3fd"></div><div class="abs" style="left:28px;top:434.9px;width:1467.8px;height:1px;background:#d3e3fd"></div><div class="abs" style="left:28px;top:455.8px;width:1467.8px;height:1px;background:#d3e3fd"></div><div class="abs" style="left:28px;top:477.9px;width:1467.8px;height:1px;background:#d3e3fd"></div><div class="row wrn" style="top:501.1px;height:36.6px;"></div><div class="abs" style="left:13.7px;top:503.1px;width:20.3px;height:13.900px;border-radius:7px;background:#a2400f;color:#fff;font:700 10px/15.800px 'Liberation Sans',sans-serif;text-align:center;letter-spacing:0.100px">16</div><svg class="ic" style="left:45.2px;top:508px;" width="8.1" height="10.2" viewBox="0 0 8.100 10.200"><path d="M.600 .500a.400.400 0 0 1 .600-.300l6.600 4.500a.400.400 0 0 1 0 .700L1.200 9.900a.400.400 0 0 1-.600-.300z" fill="#1f1f1f"/></svg><div class="m w" style="left:58.6px;top:508.93px;">Th: Table headers must have an accessible name. If the Th is intended to be visually empty, pass in screenReaderText. If the Th contains only non-text, interactive content such as a checkbox or expand</div><div class="m w" style="left:37.9px;top:522.93px;">toggle, pass in an aria-label.</div><div class="m a" style="left:1419.12px;top:503.93px;">Th.js:16</div><svg class="ic" style="left:1477.6px;top:504.3px;" width="14.4" height="13.2" viewBox="0 0 14.4 13.200"><g fill="none" stroke="#2456a8" stroke-width=".800" stroke-linejoin="round"><path d="M5.300 1h3.300c.900 0 1.500.500 1.800 1.300l.500 1.500h1.300c1.100 0 1.800 1 1.500 2.100l-1.100 4c-.400 1.400-1.400 2.300-2.900 2.300H6.400c-.900 0-1.500-.500-1.800-1.300l-.500-1.500H2.600C1.500 9.400.800 8.400 1.100 7.300l1.100-4C2.600 1.900 3.800 1 5.300 1z"/><path d="M8.600 1L5.100 12.100M9.900 1.300L6.400 12.200M4.100 9.400c.800 0 1.300-.400 1.500-1.200M10.900 3.800c-.800 0-1.300.400-1.500 1.200"/></g></svg><div class="m " style="left:28.3px;top:551.93px;">[NUEVO] Explicar errores de la consola con Copilot en Edge: haga clic</div><svg class="ic" style="left:489.8px;top:551.6px;" width="14.4" height="13.2" viewBox="0 0 14.4 13.200"><g fill="none" stroke="#2456a8" stroke-width=".800" stroke-linejoin="round"><path d="M5.300 1h3.300c.900 0 1.500.500 1.800 1.300l.500 1.500h1.300c1.100 0 1.800 1 1.500 2.100l-1.100 4c-.400 1.400-1.400 2.300-2.900 2.300H6.400c-.900 0-1.500-.500-1.800-1.300l-.500-1.500H2.600C1.500 9.400.800 8.400 1.100 7.300l1.100-4C2.600 1.900 3.800 1 5.300 1z"/><path d="M8.600 1L5.100 12.100M9.900 1.300L6.400 12.200M4.100 9.400c.800 0 1.300-.400 1.500-1.200M10.900 3.800c-.800 0-1.300.400-1.500 1.200"/></g></svg><div class="m " style="left:509.9px;top:551.93px;">para explicar un error.</div><div class="m a u" style="left:661.7px;top:551.93px;color:#1a4fae"> Más información</div><div class="abs" style="left:1348px;top:546.1px;width:149px;height:23.7px;background:#d8d8d8;border-radius:2px"></div><div class="m " style="left:1359.9px;top:550.93px;">No volver a mostrar</div><div class="row wrn" style="top:577px;height:17px;"></div><svg class="ic" style="left:11.8px;top:580.9px;" width="12.4" height="10.8" viewBox="0 0 12.4 10.800"><path d="M6.200 .500a.700.700 0 0 1 .600.350l5.200 8.900a.700.700 0 0 1-.600 1.050H1a.700.700 0 0 1-.600-1.050L5.600.850A.700.700 0 0 1 6.200.500z" fill="#e8632a"/><path d="M6.200 3.700v3.400" stroke="#fbd0b8" stroke-width="1.200"/><circle cx="6.200" cy="8.700" r=".70" fill="#fbd0b8"/></svg><div class="m w" style="left:28.3px;top:579.93px;">Microsoft Edge is moving towards a new experience that allows users to choose to browse without third-party cookies.</div><svg class="ic" style="left:1474.8px;top:578.6px;" width="14" height="14" viewBox="0 0 14.400 14.400"><path d="M7.200 1.100a6.100 6.100 0 1 0 6.100 6.100c-1.300.300-2.300-.500-2.400-1.700-1.400.100-2.400-.900-2.200-2.200-1-.300-1.600-1.100-1.500-2.200z" fill="none" stroke="#4a4a4a" stroke-width=".900"/><circle cx="5" cy="5.600" r=".8" fill="#4a4a4a"/><circle cx="4.700" cy="9.200" r=".8" fill="#4a4a4a"/><circle cx="8.300" cy="10.300" r=".8" fill="#4a4a4a"/><circle cx="8" cy="7.300" r=".6" fill="#4a4a4a"/></svg><div class="m " style="left:28.3px;top:600.93px;">destroying websocket: /api/kubernetes/apis/ramendr.openshift.io/v1alpha1/drclusters?watch=true&amp;resourceVersion=96929718</div><div class="m a u" style="left:1380.04px;top:600.93px;">ws-factory.ts:309</div><div class="m " style="left:28.3px;top:622.93px;">destroying websocket: /api/kubernetes/apis/ramendr.openshift.io/v1alpha1/drpolicies?watch=true&amp;resourceVersion=96929718</div><div class="m a u" style="left:1380.04px;top:622.93px;">ws-factory.ts:309</div><div class="m " style="left:28.3px;top:643.93px;">destroying websocket: /api/kubernetes/apis/ramendr.openshift.io/v1alpha1/namespaces/openshift-gitops/drplacementcontrols?watch=true&amp;resourceVersion=96929718</div><div class="m a u" style="left:1380.04px;top:643.93px;">ws-factory.ts:309</div><div class="abs" style="left:28px;top:617.9px;width:1467.8px;height:1px;background:#d3e3fd"></div><div class="abs" style="left:28px;top:638.8px;width:1467.8px;height:1px;background:#d3e3fd"></div><div class="row err" style="top:661.9px;height:131.9px;"></div><svg class="ic" style="left:12.4px;top:666.15px;" width="11.1" height="11.1" viewBox="0 0 11.6 11.6"><circle cx="5.800" cy="5.800" r="5.750" fill="#dc362e"/><path d="M3.800 3.800l4 4M7.800 3.800l-4 4" stroke="#fff" stroke-width="1"/></svg><svg class="ic" style="left:35px;top:668.8px;" width="8.1" height="10.2" viewBox="0 0 8.100 10.200"><path d="M.600 .500a.400.400 0 0 1 .600-.300l6.600 4.500a.400.400 0 0 1 0 .700L1.200 9.900a.400.400 0 0 1-.600-.300z" fill="#1f1f1f"/></svg><div class="m e" style="left:48.6px;top:669.93px;">TypeError: Cannot read properties of undefined (reading 'indexOf')</div><div class="m e" style="left:55.1px;top:684.93px;">at t.processNodeData (<u class="a">topology.js:121:21</u>)</div><div class="m e" style="left:55.1px;top:698.93px;">at <u class="a">topology.js:69:5</u></div><div class="m e" style="left:55.1px;top:712.93px;">at Array.forEach (&lt;anonymous&gt;)</div><div class="m e" style="left:55.1px;top:727.93px;">at t.getDiagramElements (<u class="a">topology.js:47:9</u>)</div><div class="m e" style="left:55.1px;top:741.93px;">at H (<u class="a">ApplicationOverview.tsx:424:28</u>)</div><div class="m e" style="left:55.1px;top:756.93px;">at t.ApplicationOverviewPageContent (<u class="a">ApplicationOverview.tsx:242:18</u>)</div><div class="m i u" style="left:38.2px;top:773.93px;color:#1a5ad7">Mostrar marcos de la lista ignorados</div><div class="m a u" style="left:1300.36px;top:664.93px;">ApplicationDetails.tsx:408</div><svg class="ic" style="left:1477.6px;top:665.3px;" width="14.4" height="13.2" viewBox="0 0 14.4 13.200"><g fill="none" stroke="#2456a8" stroke-width=".800" stroke-linejoin="round"><path d="M5.300 1h3.300c.900 0 1.500.500 1.800 1.300l.500 1.500h1.300c1.100 0 1.800 1 1.500 2.100l-1.100 4c-.400 1.400-1.400 2.300-2.900 2.300H6.400c-.900 0-1.500-.500-1.800-1.300l-.500-1.500H2.600C1.500 9.400.800 8.400 1.100 7.300l1.100-4C2.600 1.900 3.800 1 5.300 1z"/><path d="M8.600 1L5.100 12.100M9.900 1.300L6.400 12.200M4.100 9.400c.800 0 1.300-.400 1.500-1.200M10.900 3.800c-.800 0-1.300.400-1.500 1.200"/></g></svg><div class="row err" style="top:798px;height:149px;"></div><svg class="ic" style="left:12.4px;top:802.25px;" width="11.1" height="11.1" viewBox="0 0 11.6 11.6"><circle cx="5.800" cy="5.800" r="5.750" fill="#dc362e"/><path d="M3.800 3.800l4 4M7.800 3.800l-4 4" stroke="#fff" stroke-width="1"/></svg><svg class="ic" style="left:35px;top:804.9px;" width="8.1" height="10.2" viewBox="0 0 8.100 10.200"><path d="M.600 .500a.400.400 0 0 1 .600-.300l6.600 4.500a.400.400 0 0 1 0 .700L1.200 9.900a.400.400 0 0 1-.600-.300z" fill="#1f1f1f"/></svg><div class="m e" style="left:48px;top:805.93px;">Caught error in a child component: TypeError: Cannot read properties of undefined (reading 'indexOf')</div><div class="m e" style="left:55.1px;top:819.93px;">at t.processNodeData (<u class="a">topology.js:121:21</u>)</div><div class="m e" style="left:55.1px;top:834.93px;">at <u class="a">topology.js:69:5</u></div><div class="m e" style="left:55.1px;top:848.93px;">at Array.forEach (&lt;anonymous&gt;)</div><div class="m e" style="left:55.1px;top:862.93px;">at t.getDiagramElements (<u class="a">topology.js:47:9</u>)</div><div class="m e" style="left:55.1px;top:877.93px;">at H (<u class="a">ApplicationOverview.tsx:424:28</u>)</div><div class="m e" style="left:55.1px;top:891.93px;">at t.ApplicationOverviewPageContent (<u class="a">ApplicationOverview.tsx:242:18</u>)</div><svg class="ic" style="left:40.6px;top:910.1px;" width="6.9" height="8.2" viewBox="0 0 8.100 10.200"><path d="M.600 .500a.400.400 0 0 1 .600-.300l6.600 4.500a.400.400 0 0 1 0 .700L1.200 9.900a.400.400 0 0 1-.600-.300z" fill="#474747"/></svg><div class="m i" style="left:53.1px;top:908.93px;"><span style="color:#1f1f1f">{</span><span style="color:#7b2a78">componentStack</span><span style="color:#1f1f1f">: </span><span style="color:#a3306e">'\n    at t.ApplicationOverviewPageContent (https://…707679508102c339.min.js:12:31092)\n    at Suspense'</span><span style="color:#1f1f1f">}</span></div><div class="m i u" style="left:38.2px;top:926.93px;color:#1a5ad7">Mostrar marcos de la lista ignorados</div><div class="m a u" style="left:1333.35px;top:800.93px;">error-boundary.tsx:57</div><svg class="ic" style="left:1477.6px;top:801.3px;" width="14.4" height="13.2" viewBox="0 0 14.4 13.200"><g fill="none" stroke="#2456a8" stroke-width=".800" stroke-linejoin="round"><path d="M5.300 1h3.300c.900 0 1.500.500 1.800 1.300l.500 1.500h1.300c1.100 0 1.800 1 1.500 2.100l-1.100 4c-.400 1.400-1.400 2.300-2.900 2.300H6.400c-.900 0-1.500-.500-1.800-1.300l-.500-1.500H2.600C1.500 9.400.800 8.400 1.100 7.300l1.100-4C2.600 1.900 3.800 1 5.300 1z"/><path d="M8.600 1L5.100 12.100M9.900 1.300L6.400 12.200M4.100 9.400c.800 0 1.300-.400 1.500-1.200M10.900 3.800c-.800 0-1.300.400-1.500 1.200"/></g></svg><div class="row err" style="top:951.1px;height:64.8px;"></div><svg class="ic" style="left:12.4px;top:955.35px;" width="11.1" height="11.1" viewBox="0 0 11.6 11.6"><circle cx="5.800" cy="5.800" r="5.750" fill="#dc362e"/><path d="M3.800 3.800l4 4M7.800 3.800l-4 4" stroke="#fff" stroke-width="1"/></svg><svg class="ic" style="left:35px;top:958px;" width="8.1" height="10.2" viewBox="0 0 8.100 10.200"><path d="M.600 .500a.400.400 0 0 1 .600-.300l6.600 4.500a.400.400 0 0 1 0 .700L1.200 9.900a.400.400 0 0 1-.600-.300z" fill="#1f1f1f"/></svg><div class="m e" style="left:48.6px;top:958.93px;">ResourceError: RequestAborted</div><div class="m e" style="left:55.1px;top:972.93px;">at <u class="a">resource-request.ts:736:15</u></div><div class="m e" style="left:55.1px;top:986.93px;">at Generator.throw (&lt;anonymous&gt;)</div><div class="m e" style="left:55.1px;top:1001.93px;">at r (<u class="a">1533.dc991100.js:1:132104</u>)</div><div class="m a u" style="left:1300.36px;top:953.93px;">ApplicationDetails.tsx:346</div><svg class="ic" style="left:1477.6px;top:954.3px;" width="14.4" height="13.2" viewBox="0 0 14.4 13.200"><g fill="none" stroke="#2456a8" stroke-width=".800" stroke-linejoin="round"><path d="M5.300 1h3.300c.900 0 1.500.500 1.800 1.300l.500 1.500h1.300c1.100 0 1.800 1 1.500 2.100l-1.100 4c-.400 1.400-1.400 2.300-2.900 2.300H6.400c-.900 0-1.500-.500-1.800-1.300l-.500-1.500H2.600C1.500 9.400.800 8.400 1.100 7.300l1.100-4C2.600 1.900 3.800 1 5.300 1z"/><path d="M8.600 1L5.100 12.100M9.900 1.300L6.400 12.200M4.100 9.400c.800 0 1.300-.400 1.500-1.200M10.900 3.800c-.800 0-1.300.400-1.500 1.200"/></g></svg><div class="row err" style="top:1020.1px;height:66px;"></div><svg class="ic" style="left:12.4px;top:1024.35px;" width="11.1" height="11.1" viewBox="0 0 11.6 11.6"><circle cx="5.800" cy="5.800" r="5.750" fill="#dc362e"/><path d="M3.800 3.800l4 4M7.800 3.800l-4 4" stroke="#fff" stroke-width="1"/></svg><svg class="ic" style="left:35px;top:1027px;" width="8.1" height="10.2" viewBox="0 0 8.100 10.200"><path d="M.600 .500a.400.400 0 0 1 .600-.300l6.600 4.500a.400.400 0 0 1 0 .700L1.200 9.900a.400.400 0 0 1-.600-.300z" fill="#1f1f1f"/></svg><div class="m e" style="left:48.6px;top:1026.93px;">ResourceError: RequestAborted</div><div class="m e" style="left:55.1px;top:1042.93px;">at <u class="a">resource-request.ts:736:15</u></div><div class="m e" style="left:55.1px;top:1056.93px;">at Generator.throw (&lt;anonymous&gt;)</div><div class="m e" style="left:55.1px;top:1071.93px;">at r (<u class="a">1533.dc991100.js:1:132104</u>)</div><div class="m a u" style="left:1300.36px;top:1022.93px;">ApplicationDetails.tsx:353</div><svg class="ic" style="left:1477.6px;top:1023.3px;" width="14.4" height="13.2" viewBox="0 0 14.4 13.200"><g fill="none" stroke="#2456a8" stroke-width=".800" stroke-linejoin="round"><path d="M5.300 1h3.300c.900 0 1.500.500 1.800 1.300l.500 1.500h1.300c1.100 0 1.800 1 1.500 2.100l-1.100 4c-.400 1.400-1.400 2.300-2.900 2.300H6.400c-.900 0-1.500-.500-1.800-1.300l-.500-1.500H2.600C1.500 9.400.800 8.400 1.100 7.300l1.100-4C2.600 1.900 3.800 1 5.300 1z"/><path d="M8.600 1L5.100 12.100M9.900 1.300L6.400 12.200M4.100 9.400c.800 0 1.300-.400 1.500-1.200M10.900 3.800c-.800 0-1.300.400-1.500 1.200"/></g></svg><svg class="ic" style="left:11.5px;top:1092.6px;" width="7" height="12" viewBox="0 0 7 12"><path d="M1.200 1.300l4.400 4.700-4.400 4.700" fill="none" stroke="#1a6cf0" stroke-width="1.300"/></svg><div class="abs" style="left:1525px;top:58.2px;width:15px;height:1054.8px;background:#fcfcfc"></div><svg class="ic" style="left:1527.8px;top:68.6px;" width="9.2" height="4.6" viewBox="0 0 9.200 4.600"><path d="M0 4.600L4.600 0l4.600 4.600z" fill="#8b8b8b"/></svg><svg class="ic" style="left:1527.8px;top:1098.4px;" width="9.2" height="4.6" viewBox="0 0 9.200 4.600"><path d="M0 0h9.200L4.600 4.600z" fill="#6b6b6b"/></svg><div class="abs" style="left:1527.8px;top:972px;width:9px;height:116.2px;background:#8b8b8b;border-radius:4.500px"></div><div class="abs" style="left:0px;top:1112.6px;width:1540px;height:1px;background:#cfdcf6"></div><div class="abs" style="left:0px;top:1113.6px;width:1540px;height:26.4px;background:#edf2fa"></div><div class="abs" style="left:0px;top:1140px;width:1540px;height:1px;background:#cfdcf6"></div><div class="abs" style="left:0px;top:1116.3px;width:63.8px;height:28.7px;background:#fff;border-radius:4px 4px 0 0"></div><div class="s" style="left:10px;top:1122.54px;font-size:12px;line-height:16px;color:#0b57d0;font-weight:400;letter-spacing:-0.3px;">Consola</div><div class="s" style="left:74.2px;top:1122.54px;font-size:12px;line-height:16px;color:#6b6b6b;font-weight:400;">Problemas</div><svg class="ic" style="left:149.5px;top:1119.5px;" width="15" height="15" viewBox="0 0 15 15"><path d="M7.500 .8v13.400M.8 7.500h13.400" stroke="#555" stroke-width="1.100" fill="none"/></svg><svg class="ic" style="left:1484.5px;top:1120px;" width="19" height="14" viewBox="0 0 19 14"><g fill="none" stroke="#333" stroke-width="1.200" stroke-linejoin="round"><rect x="6.700" y="6.300" width="10.500" height="6.300" rx="1.200"/><path d="M9.600 4V2.900c0-.9.600-1.500 1.500-1.500h.8M13.300 1.400h1.700M16.400 1.600c.500.200.800.700.800 1.300v.5M17.200 5v1.300M9.600 5.300v1"/><path d="M4.700 9.500C2.700 9.300 1.500 8 1.500 6.200S2.700 3.100 4.600 2.900M3.600 1.600l1.300 1.300-1.300 1.300"/></g></svg><svg class="ic" style="left:1512.5px;top:1120.5px;" width="17" height="13" viewBox="0 0 17 13"><g fill="none" stroke="#9aa0a8" stroke-width="1.100"><rect x=".8" y=".8" width="15.400" height="11.400" rx="1.600"/><path d="M.8 8.200h5.600M10.600 8.200h5.600M8.500 9.800V4.200M6.700 5.900l1.800-1.800 1.800 1.800"/></g></svg></div></body></html>
